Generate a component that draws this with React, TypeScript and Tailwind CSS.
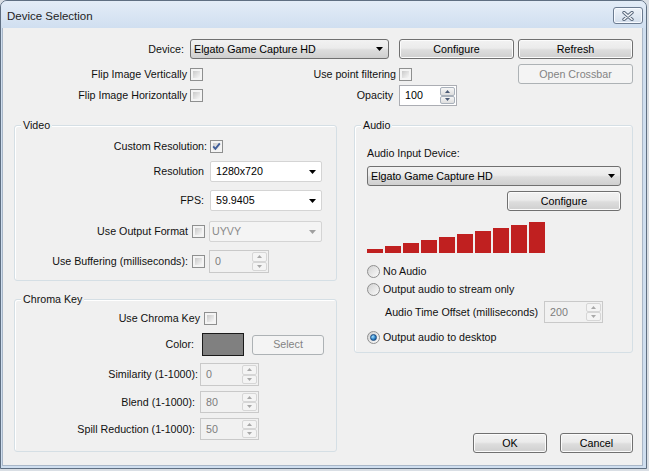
import React from 'react';

const BTN_FACE = 'bg-[linear-gradient(#f2f2f2,#ebebeb_45%,#dddddd_55%,#cfcfcf)]';

function Button({ label, className = '', disabled = false }: { label: string; className?: string; disabled?: boolean }) {
    return (
        <div
            className={`h-[20px] shrink-0 flex items-center justify-center rounded-[3px] border ${
                disabled
                    ? 'border-[#adb2b5] bg-[#f4f4f4] text-[#838383]'
                    : `border-[#707070] ${BTN_FACE} shadow-[inset_0_0_0_1px_#fbfbfb] text-black`
            } ${className}`}
        >
            {label}
        </div>
    );
}

function Check({ checked = false, className = '' }: { checked?: boolean; className?: string }) {
    return (
        <div className={`relative w-[13px] h-[13px] shrink-0 border border-[#8e8f8f] bg-[#f4f4f4] p-[2px] ${className}`}>
            <div className="w-full h-full bg-[linear-gradient(135deg,#c9c9c9,#f7f7f7)]" />
            {checked && (
                <svg className="absolute left-0 top-0" width="11" height="11" viewBox="0 0 11 11">
                    <path d="M2.2 5.4 L4.4 7.8 L8.8 2.4" fill="none" stroke="#3f5d99" strokeWidth="1.9" />
                </svg>
            )}
        </div>
    );
}

function Radio({ checked = false }: { checked?: boolean }) {
    return (
        <div className="w-[13px] h-[13px] shrink-0 rounded-full border border-[#8f8f8f] bg-[linear-gradient(135deg,#d2d2d2,#fbfbfb)] flex items-center justify-center">
            {checked && (
                <div className="w-[7px] h-[7px] rounded-full border border-[#1c4c80] bg-[radial-gradient(circle_at_35%_35%,#a8e2ff,#2a80c6_55%,#0f3f78)]" />
            )}
        </div>
    );
}

type ComboKind = 'button' | 'white' | 'disabled';

function Combo({ value, className = '', kind = 'button' }: { value: string; className?: string; kind?: ComboKind }) {
    const look =
        kind === 'button'
            ? `rounded-[3px] border-[#707070] ${BTN_FACE} text-black pl-[3px]`
            : kind === 'white'
            ? 'rounded-[2px] border-[#d4d4d4] bg-white text-black pl-[5px]'
            : 'rounded-[2px] border-[#d4d4d4] bg-[#f4f4f4] text-[#8a8a8a] pl-[2px]';
    return (
        <div className={`flex items-center shrink-0 border ${look} ${className}`}>
            <span className="flex-1">{value}</span>
            <svg width="7" height="4" viewBox="0 0 7 4" className="mr-[5px]">
                <path d="M0 0H7L3.5 4Z" fill={kind === 'disabled' ? '#a0a0a0' : '#000'} />
            </svg>
        </div>
    );
}

function SpinHalf({ up, disabled }: { up: boolean; disabled: boolean }) {
    return (
        <div
            className={`flex-1 flex items-center justify-center rounded-[2px] border ${
                disabled
                    ? 'border-[#d6d6d6] bg-[#f4f4f4]'
                    : 'border-[#a9b1bb] bg-[linear-gradient(#f6f6f6,#dedede)]'
            }`}
        >
            <svg width="5" height="3" viewBox="0 0 5 3">
                <path d={up ? 'M0 3H5L2.5 0Z' : 'M0 0H5L2.5 3Z'} fill={disabled ? '#a8a8a8' : '#4b5a75'} />
            </svg>
        </div>
    );
}

function Spin({ value, className = '', disabled = false }: { value: string; className?: string; disabled?: boolean }) {
    return (
        <div
            className={`flex shrink-0 border ${
                disabled ? 'border-[#c9c9c9] bg-[#f1f1f1] text-[#7d7d7d]' : 'border-[#abadb3] bg-white text-black'
            } ${className}`}
        >
            <div className="flex-1 pl-[5px] flex items-center">{value}</div>
            <div className="w-[17px] flex flex-col p-px">
                <SpinHalf up disabled={disabled} />
                <SpinHalf up={false} disabled={disabled} />
            </div>
        </div>
    );
}

function Group({ title, className = '', children }: { title: string; className?: string; children: React.ReactNode }) {
    return (
        <div className={`relative border border-[#d5dfe5] rounded-[3px] shadow-[inset_1px_1px_0_#ffffff] ${className}`}>
            <div className="absolute left-[6px] -top-[7px] px-[2px] bg-[#f0f0f0] leading-[13px]">{title}</div>
            {children}
        </div>
    );
}

const bars = [4, 7, 10, 13, 16, 19, 22, 25, 28, 31];

export default function App() {
    return (
        <div className="w-[649px] h-[471px] overflow-hidden bg-[#d9dee4] font-['Liberation_Sans',Arial,sans-serif] text-[10.7px] leading-[13px] text-[#111]">
            <div className="w-[647px] h-[469px] border border-[#5f6f82] rounded-t-[7px] bg-[#cfdeef] flex flex-col">
                {/* Title bar */}
                <div className="h-[27px] shrink-0 flex justify-between rounded-t-[6px] bg-[linear-gradient(#e3ecf7,#d0dff0)]">
                    <div className="pl-[6px] pt-[9px] text-[11.5px] text-[#1e1e1e]">Device Selection</div>
                    <div className="mt-[6px] mr-[3px] w-[30px] h-[17px] rounded-[3px] border border-[#6b7b90] bg-[linear-gradient(#eef3f9,#d3deec)] shadow-[inset_0_0_0_1px_#f7faff] flex items-center justify-center">
                        <svg width="12" height="10" viewBox="0 0 12 10">
                            <path d="M2 1.5 L10 8.5 M10 1.5 L2 8.5" stroke="#56657a" strokeWidth="3.4" strokeLinecap="round" />
                            <path d="M2 1.5 L10 8.5 M10 1.5 L2 8.5" stroke="#f4f6f9" strokeWidth="1.6" strokeLinecap="round" />
                        </svg>
                    </div>
                </div>

                {/* Client area */}
                <div className="ml-[1px] w-[641px] h-[438px] border border-t-0 border-[#a9b7c8] bg-[#f0f0f0] pt-[11px]">
                    <div className="flex items-center h-[20px]">
                        <div className="w-[181px] text-right">Device:</div>
                        <Combo kind="button" className="ml-[6px] w-[199px] h-[20px]" value="Elgato Game Capture HD" />
                        <Button className="ml-[10px] w-[115px]" label="Configure" />
                        <Button className="ml-[4px] w-[115px]" label="Refresh" />
                    </div>
                    <div className="flex items-center h-[20px] mt-[5px]">
                        <div className="w-[184px] text-right">Flip Image Vertically</div>
                        <Check className="ml-[3px]" />
                        <div className="w-[193px] text-right">Use point filtering</div>
                        <Check className="ml-[3px]" />
                        <Button disabled className="ml-[106px] w-[115px]" label="Open Crossbar" />
                    </div>
                    <div className="flex items-center h-[21px] mt-[1px]">
                        <div className="w-[184px] text-right">Flip Image Horizontally</div>
                        <Check className="ml-[3px]" />
                        <div className="w-[190px] text-right">Opacity</div>
                        <Spin className="ml-[6px] w-[58px] h-[21px]" value="100" />
                    </div>

                    <div className="flex mt-[19px]">
                        {/* Left column */}
                        <div className="ml-[11px] w-[323px] flex flex-col">
                            <Group title="Video" className="pt-[14px] pb-[7px]">
                                <div className="flex items-center h-[13px]">
                                    <div className="w-[192px] text-right">Custom Resolution:</div>
                                    <Check checked className="ml-[3px]" />
                                </div>
                                <div className="flex items-center h-[21px] mt-[8px]">
                                    <div className="w-[189px] text-right">Resolution</div>
                                    <Combo kind="white" className="ml-[6px] w-[112px] h-[21px]" value="1280x720" />
                                </div>
                                <div className="flex items-center h-[21px] mt-[8px]">
                                    <div className="w-[189px] text-right">FPS:</div>
                                    <Combo kind="white" className="ml-[6px] w-[112px] h-[21px]" value="59.9405" />
                                </div>
                                <div className="flex items-center h-[21px] mt-[10px]">
                                    <div className="w-[173px] text-right">Use Output Format</div>
                                    <Check className="ml-[4px]" />
                                    <Combo kind="disabled" className="ml-[4px] w-[113px] h-[21px]" value="UYVY" />
                                </div>
                                <div className="flex items-center h-[23px] mt-[8px]">
                                    <div className="w-[173px] text-right">Use Buffering (milliseconds):</div>
                                    <Check className="ml-[4px]" />
                                    <Spin disabled className="ml-[4px] w-[60px] h-[23px]" value="0" />
                                </div>
                            </Group>

                            <Group title="Chroma Key" className="mt-[18px] pt-[12px] pb-[11px]">
                                <div className="flex items-center h-[13px]">
                                    <div className="w-[185px] text-right">Use Chroma Key</div>
                                    <Check className="ml-[4px]" />
                                </div>
                                <div className="flex items-center h-[23px] mt-[8px]">
                                    <div className="w-[179px] text-right">Color:</div>
                                    <div className="ml-[8px] w-[42px] h-[23px] bg-[#808080] border border-[#1a1a1a]" />
                                    <Button disabled className="ml-[8px] w-[72px]" label="Select" />
                                </div>
                                <div className="flex items-center h-[23px] mt-[7px]">
                                    <div className="w-[183px] text-right">Similarity (1-1000):</div>
                                    <Spin disabled className="ml-[2px] w-[59px] h-[23px]" value="0" />
                                </div>
                                <div className="flex items-center h-[22px] mt-[5px]">
                                    <div className="w-[180px] text-right">Blend (1-1000):</div>
                                    <Spin disabled className="ml-[5px] w-[59px] h-[22px]" value="80" />
                                </div>
                                <div className="flex items-center h-[22px] mt-[5px]">
                                    <div className="w-[180px] text-right">Spill Reduction (1-1000):</div>
                                    <Spin disabled className="ml-[5px] w-[59px] h-[22px]" value="50" />
                                </div>
                            </Group>
                        </div>

                        {/* Right column */}
                        <div className="ml-[17px] w-[279px] flex flex-col">
                            <Group title="Audio" className="pt-[20px] pl-[12px] pr-[11px] pb-[6px] flex flex-col">
                                <div className="h-[14px] flex items-center">Audio Input Device:</div>
                                <Combo kind="button" className="mt-[6px] h-[20px]" value="Elgato Game Capture HD" />
                                <Button className="mt-[5px] self-end w-[114px]" label="Configure" />
                                <div className="mt-[11px] h-[31px] flex items-end gap-[2px]">
                                    {bars.map((h, i) => (
                                        <div key={i} className="w-[16px] bg-[#c02020]" style={{ height: h }} />
                                    ))}
                                </div>
                                <div className="mt-[9px] h-[18px] flex items-center gap-[3px]">
                                    <Radio />
                                    <span>No Audio</span>
                                </div>
                                <div className="h-[18px] flex items-center gap-[3px]">
                                    <Radio />
                                    <span>Output audio to stream only</span>
                                </div>
                                <div className="mt-[3px] h-[22px] flex items-center">
                                    <div className="ml-[18px] w-[159px]">Audio Time Offset (milliseconds)</div>
                                    <Spin disabled className="w-[59px] h-[22px]" value="200" />
                                </div>
                                <div className="mt-[5px] h-[18px] flex items-center gap-[3px]">
                                    <Radio checked />
                                    <span>Output audio to desktop</span>
                                </div>
                            </Group>
                            <div className="mt-auto -mb-[1px] flex justify-end">
                                <Button className="w-[74px]" label="OK" />
                                <Button className="ml-[13px] w-[73px]" label="Cancel" />
                            </div>
                        </div>
                    </div>
                </div>
            </div>
        </div>
    );
}
